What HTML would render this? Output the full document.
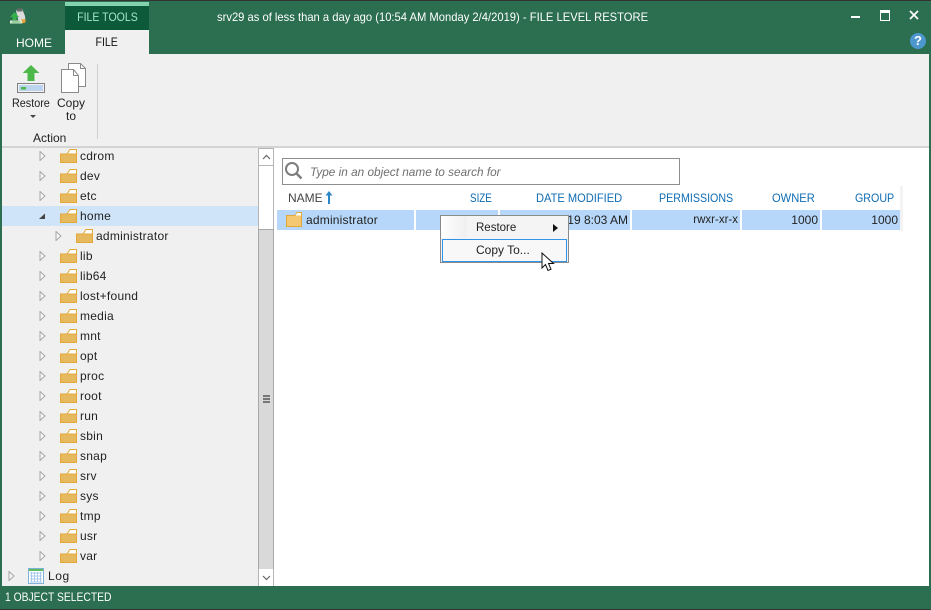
<!DOCTYPE html>
<html><head><meta charset="utf-8">
<style>
html,body{margin:0;padding:0}
body{width:931px;height:610px;overflow:hidden;position:relative;background:#2b6e50;font-family:"Liberation Sans",sans-serif;font-size:12px;color:#222}
.a{position:absolute;white-space:nowrap}
.sx{transform-origin:0 50%}
.row{position:absolute;left:0;width:256px;height:20px}
.row .t{position:absolute;left:78px;top:3px;letter-spacing:.25px;line-height:14px}
.row svg.f{position:absolute;left:58px;top:2px}
.row svg.e{position:absolute;left:37px;top:5px}
.h{color:#0e6cb3;position:absolute;top:191px;line-height:14px;white-space:nowrap;transform-origin:0 50%}
.c{position:absolute;top:210px;height:20px;background:#b6d7f9;line-height:21px;text-align:right;color:#222;white-space:nowrap;box-sizing:border-box;padding-right:2px}
</style></head><body>
<div class="a" style="left:0;top:0;width:931px;height:1px;background:#333"></div>

<!-- title -->
<svg class="a" style="left:10px;top:8px" width="16" height="16" viewBox="0 0 16 16">
<path d="M6 3L8 .5h4L13 3l2 5 .5 5-4 1-3-1z" fill="#dcdcdc"/>
<path d="M7 .5h5l.5 3H7z" fill="#6a6a6a"/>
<path d="M11 11.500l4.500-.5v3.500L12 15.500z" fill="#e8a33c"/>
<path d="M4.500 4l4.500 5H6.500v3h-4V9H0z" fill="#35b04a"/>
<rect x="0" y="12.500" width="12" height="3" fill="#d4efd4"/><rect x="2" y="13.500" width="8" height="1" fill="#5cba5c"/>
</svg>
<div class="a" style="left:65px;top:2px;width:84px;height:4px;background:#83d3ae"></div>
<div class="a" style="left:65px;top:6px;width:84px;height:24px;background:#0d5a3b;color:#a4e6c4;text-align:center;line-height:22px;font-size:12px"><span style="display:inline-block;transform:scaleX(.88)">FILE TOOLS</span></div>
<div class="a sx" style="left:217px;top:10px;color:#fff;line-height:14px;font-size:11.800px;transform:scaleX(.95)">srv29 as of less than a day ago (10:54 AM Monday 2/4/2019) - FILE LEVEL RESTORE</div>
<div class="a" style="left:16px;top:36px;color:#fff;line-height:14px">HOME</div>
<div class="a" style="left:65px;top:30px;width:84px;height:25px;background:#f0f0f0;color:#111;text-align:center;line-height:25px"><span style="display:inline-block;transform:scaleX(.88)">FILE</span></div>

<!-- window controls -->
<div class="a" style="left:851px;top:16px;width:9px;height:2px;background:#fff"></div>
<div class="a" style="left:880px;top:10px;width:8px;height:7px;border:1px solid #fff;border-top:3px solid #fff"></div>
<svg class="a" style="left:909px;top:10px" width="10" height="10" viewBox="0 0 10 10"><path d="M1 1l8 8M9 1l-8 8" stroke="#fff" stroke-width="1.700"/></svg>
<div class="a" style="left:910px;top:33px;width:16px;height:16px;border-radius:50%;background:#4d97cf;color:#fff;font-weight:bold;font-size:13px;line-height:16px;text-align:center">?</div>

<!-- ribbon -->
<div class="a" style="left:2px;top:54px;width:927px;height:93px;background:#f0f0f0"></div>
<div class="a" style="left:2px;top:146px;width:927px;height:2px;background:#d4d4d4"></div>
<div class="a" style="left:97px;top:64px;width:1px;height:75px;background:#d0d0d0"></div>
<svg class="a" style="left:17px;top:64px" width="29" height="30" viewBox="0 0 29 30">
<path d="M14 1l8.300 8H17.500v8h-7V9H5.700z" fill="#4cb84a"/>
<rect x="0.500" y="19.500" width="27" height="9" fill="#f2f2f2" stroke="#808080"/>
<rect x="2" y="21" width="24" height="6" fill="#bcd5ee"/>
<rect x="4" y="23" width="5" height="2.500" fill="#4cb84a"/>
</svg>
<svg class="a" style="left:60px;top:62px" width="27" height="32" viewBox="0 0 27 32">
<path d="M8.500 1.500h12l5 5V24.500H8.500z" fill="#fff" stroke="#8a8a8a"/>
<path d="M20.500 1.500v5h5" fill="none" stroke="#8a8a8a"/>
<path d="M1.500 7.500h12l5 6V30.500H1.500z" fill="#fff" stroke="#8a8a8a"/>
<path d="M13.500 7.500v6h5" fill="none" stroke="#8a8a8a"/>
</svg>
<div class="a sx" style="left:12px;top:96px;line-height:14px;transform:scaleX(.9)">Restore</div>
<div class="a" style="left:30px;top:115px;width:0;height:0;border:3px solid transparent;border-top:3px solid #444"></div>
<div class="a" style="left:57px;top:96px;line-height:14px">Copy</div>
<div class="a" style="left:66px;top:109px;line-height:14px">to</div>
<div class="a" style="left:33px;top:131px;line-height:14px">Action</div>

<!-- tree -->
<div class="a" style="left:2px;top:148px;width:256px;height:438px;background:#f0f0f0;overflow:hidden" id="tree">
<svg width="0" height="0" style="position:absolute"><defs>
<symbol id="fo" viewBox="0 0 17 15"><path d="M7 6L10 1.500h6.500V6z" fill="#fff" stroke="#e2a93a"/><rect x=".5" y="6" width="16" height="8.500" fill="#e6b95f" stroke="#e2a93a"/></symbol>
<symbol id="ex" viewBox="0 0 7 10"><path d="M1 .5L6 5 1 9.500z" fill="#f5f5f5" stroke="#a6a6a6"/></symbol>
</defs></svg>
<div class="row" style="top:-2px"><svg class="e" width="7" height="10"><use href="#ex"/></svg><svg class="f" width="17" height="15"><use href="#fo"/></svg><span class="t">cdrom</span></div>
<div class="row" style="top:18px"><svg class="e" width="7" height="10"><use href="#ex"/></svg><svg class="f" width="17" height="15"><use href="#fo"/></svg><span class="t">dev</span></div>
<div class="row" style="top:38px"><svg class="e" width="7" height="10"><use href="#ex"/></svg><svg class="f" width="17" height="15"><use href="#fo"/></svg><span class="t">etc</span></div>
<div class="row" style="top:58px;background:#cfe4f9"><svg class="e" width="7" height="10" viewBox="0 0 7 10"><path d="M0 8L6 2.500V8z" fill="#444"/></svg><svg class="f" width="17" height="15"><use href="#fo"/></svg><span class="t">home</span></div>
<div class="row" style="top:78px"><svg class="e" style="left:53px" width="7" height="10"><use href="#ex"/></svg><svg class="f" style="left:74px" width="17" height="15"><use href="#fo"/></svg><span class="t" style="left:94px">administrator</span></div>
<div class="row" style="top:98px"><svg class="e" width="7" height="10"><use href="#ex"/></svg><svg class="f" width="17" height="15"><use href="#fo"/></svg><span class="t">lib</span></div>
<div class="row" style="top:118px"><svg class="e" width="7" height="10"><use href="#ex"/></svg><svg class="f" width="17" height="15"><use href="#fo"/></svg><span class="t">lib64</span></div>
<div class="row" style="top:138px"><svg class="e" width="7" height="10"><use href="#ex"/></svg><svg class="f" width="17" height="15"><use href="#fo"/></svg><span class="t">lost+found</span></div>
<div class="row" style="top:158px"><svg class="e" width="7" height="10"><use href="#ex"/></svg><svg class="f" width="17" height="15"><use href="#fo"/></svg><span class="t">media</span></div>
<div class="row" style="top:178px"><svg class="e" width="7" height="10"><use href="#ex"/></svg><svg class="f" width="17" height="15"><use href="#fo"/></svg><span class="t">mnt</span></div>
<div class="row" style="top:198px"><svg class="e" width="7" height="10"><use href="#ex"/></svg><svg class="f" width="17" height="15"><use href="#fo"/></svg><span class="t">opt</span></div>
<div class="row" style="top:218px"><svg class="e" width="7" height="10"><use href="#ex"/></svg><svg class="f" width="17" height="15"><use href="#fo"/></svg><span class="t">proc</span></div>
<div class="row" style="top:238px"><svg class="e" width="7" height="10"><use href="#ex"/></svg><svg class="f" width="17" height="15"><use href="#fo"/></svg><span class="t">root</span></div>
<div class="row" style="top:258px"><svg class="e" width="7" height="10"><use href="#ex"/></svg><svg class="f" width="17" height="15"><use href="#fo"/></svg><span class="t">run</span></div>
<div class="row" style="top:278px"><svg class="e" width="7" height="10"><use href="#ex"/></svg><svg class="f" width="17" height="15"><use href="#fo"/></svg><span class="t">sbin</span></div>
<div class="row" style="top:298px"><svg class="e" width="7" height="10"><use href="#ex"/></svg><svg class="f" width="17" height="15"><use href="#fo"/></svg><span class="t">snap</span></div>
<div class="row" style="top:318px"><svg class="e" width="7" height="10"><use href="#ex"/></svg><svg class="f" width="17" height="15"><use href="#fo"/></svg><span class="t">srv</span></div>
<div class="row" style="top:338px"><svg class="e" width="7" height="10"><use href="#ex"/></svg><svg class="f" width="17" height="15"><use href="#fo"/></svg><span class="t">sys</span></div>
<div class="row" style="top:358px"><svg class="e" width="7" height="10"><use href="#ex"/></svg><svg class="f" width="17" height="15"><use href="#fo"/></svg><span class="t">tmp</span></div>
<div class="row" style="top:378px"><svg class="e" width="7" height="10"><use href="#ex"/></svg><svg class="f" width="17" height="15"><use href="#fo"/></svg><span class="t">usr</span></div>
<div class="row" style="top:398px"><svg class="e" width="7" height="10"><use href="#ex"/></svg><svg class="f" width="17" height="15"><use href="#fo"/></svg><span class="t">var</span></div>
<div class="row" style="top:418px"><svg class="e" style="left:6px" width="7" height="10"><use href="#ex"/></svg>
<svg style="position:absolute;left:26px;top:2px" width="16" height="16" viewBox="0 0 16 16"><rect x=".5" y=".5" width="15" height="15" fill="#fff" stroke="#7fb2d6"/><rect x="1" y="1" width="14" height="2" fill="#5dbb5d"/><path d="M2 5h12M2 8h12M2 11h12M2 14h12M3.500 4v10M6.500 4v10M9.500 4v10M12.500 4v10" stroke="#a9c9ea" stroke-width="1"/></svg>
<span class="t" style="left:46px;letter-spacing:.6px">Log</span></div>
</div>

<!-- scrollbar -->
<div class="a" style="left:258px;top:148px;width:16px;height:438px;background:#fff;box-shadow:inset 1px 0 #b5b5b5,inset -1px 0 #b5b5b5"></div>
<div class="a" style="left:258px;top:148px;width:16px;height:17px;background:#fff;border-bottom:1px solid #b5b5b5;box-shadow:inset 1px 0 #b5b5b5,inset -1px 0 #b5b5b5,inset 0 1px #b5b5b5"></div>
<svg class="a" style="left:262px;top:154px" width="9" height="6"><path d="M1 5l3.500-3.500L8 5" fill="none" stroke="#666" stroke-width="1.200"/></svg>
<div class="a" style="left:258px;top:229px;width:14px;height:339px;background:#d9d9d9;border:1px solid #a8a8a8"></div>
<div class="a" style="left:263px;top:395px;width:7px;height:2px;background:#777"></div>
<div class="a" style="left:263px;top:398px;width:7px;height:2px;background:#777"></div>
<div class="a" style="left:263px;top:401px;width:7px;height:2px;background:#777"></div>
<div class="a" style="left:258px;top:569px;width:16px;height:17px;background:#fff;box-shadow:inset 1px 0 #b5b5b5,inset -1px 0 #b5b5b5"></div>
<svg class="a" style="left:262px;top:575px" width="9" height="6"><path d="M1 1l3.500 3.500L8 1" fill="none" stroke="#666" stroke-width="1.200"/></svg>

<!-- right pane -->
<div class="a" style="left:274px;top:148px;width:655px;height:438px;background:#fff"></div>
<div class="a" style="left:282px;top:158px;width:396px;height:25px;border:1px solid #8e8e8e;background:#fff"></div>
<svg class="a" style="left:284px;top:161px" width="20" height="20" viewBox="0 0 20 20"><circle cx="8" cy="8" r="6" fill="none" stroke="#7d7d7d" stroke-width="2"/><path d="M12.500 12.500l5 5" stroke="#7d7d7d" stroke-width="2.500"/></svg>
<div class="a" style="left:310px;top:165px;color:#6f6f6f;font-style:italic;line-height:14px;font-size:11.800px">Type in an object name to search for</div>

<div class="a" style="left:900px;top:186px;width:3px;height:45px;background:#f3f3f3"></div>
<div class="h" style="left:288px;color:#444">NAME</div>
<svg class="a" style="left:325px;top:191px" width="8" height="13" viewBox="0 0 8 13"><path d="M4 0l3.500 4.500H5V13H3V4.500H.5z" fill="#2b87c9"/></svg>
<div class="h" style="left:470px;transform:scaleX(.82)">SIZE</div>
<div class="h" style="left:536px;transform:scaleX(.925)">DATE MODIFIED</div>
<div class="h" style="left:659px;transform:scaleX(.89)">PERMISSIONS</div>
<div class="h" style="left:772px;transform:scaleX(.93)">OWNER</div>
<div class="h" style="left:855px;transform:scaleX(.89)">GROUP</div>

<div class="c" style="left:277px;width:137px"></div>
<svg class="a" style="left:286px;top:212px" width="16" height="15" viewBox="0 0 16 15"><path d="M.5 14.500V3.500H9L11 .5h4.500v14z" fill="#f3c871" stroke="#e2a93a"/><path d="M9.500 3.500L11 1h4v2.500z" fill="#fff"/></svg>
<div class="a" style="left:306px;top:213px;line-height:14px;letter-spacing:.2px">administrator</div>
<div class="c" style="left:416px;width:82px"></div>
<div class="c" style="left:500px;width:130px">2/4/2019 8:03 AM</div>
<div class="c" style="left:632px;width:108px;font-size:11.500px">rwxr-xr-x</div>
<div class="c" style="left:742px;width:78px">1000</div>
<div class="c" style="left:822px;width:78px">1000</div>

<!-- context menu -->
<div class="a" style="left:440px;top:215px;width:127px;height:46px;background:#f4f4f4;border:1px solid #8a8a8a"></div>
<div class="a" style="left:441px;top:216px;width:26px;height:22px;background:linear-gradient(90deg,#fff,#efefef)"></div>
<div class="a" style="left:476px;top:221px;line-height:14px;font-size:11.500px">Restore</div>
<div class="a" style="left:553px;top:224px;width:0;height:0;border:4px solid transparent;border-left:5px solid #111"></div>
<div class="a" style="left:442px;top:239px;width:123px;height:21px;border:1px solid #2f93ea;background:#f8f8f8"></div>
<div class="a" style="left:476px;top:243px;line-height:14px">Copy To...</div>
<svg class="a" style="left:541px;top:252px" width="14" height="21" viewBox="0 0 14 21"><path d="M1 1v15l3.500-3.500 2.500 6 3-1.300-2.500-5.700H12.500z" fill="#fff" stroke="#111" stroke-width="1"/></svg>

<!-- status -->
<div class="a sx" style="left:5px;top:590px;color:#fff;line-height:14px;transform:scaleX(.86)">1 OBJECT SELECTED</div>
<div class="a" style="left:0;top:609px;width:931px;height:1px;background:#333"></div>
</body></html>
